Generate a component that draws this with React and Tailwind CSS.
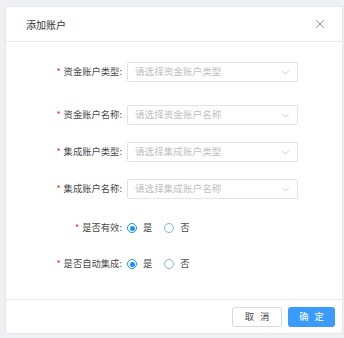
import React from 'react';

const FONT = { fontFamily: '"Noto Sans CJK SC", "Noto Sans", sans-serif' };

const Chevron = () => (
  <svg width="7" height="5" viewBox="0 0 7 5" className="shrink-0">
    <path d="M0.5 1 L3.5 4 L6.5 1" fill="none" stroke="#bfbfbf" strokeWidth="0.8" />
  </svg>
);

// label column ends at the colon, select starts 5px after it
const Label = ({ children }) => (
  <div className="w-[116px] shrink-0 flex justify-end items-center text-[9.3px] text-[#4a4a4a]">
    <span className="text-[#f5222d] mr-[3px] text-[9px]">*</span>
    <span>{children}:</span>
  </div>
);

const SelectRow = ({ label, placeholder, className }) => (
  <div className={`flex items-center ${className}`}>
    <Label>{label}</Label>
    <div className="ml-[5px] w-[171px] h-[20px] border border-[#e3e3e3] rounded-[2px] bg-white flex items-center justify-between pl-[7px] pr-[8px]">
      <span className="text-[9.6px] text-[#c0c0c0] leading-none">{placeholder}</span>
      <Chevron />
    </div>
  </div>
);

const Radio = ({ checked, text }) => (
  <div className="flex items-center">
    <span className={`w-[10px] h-[10px] rounded-full border flex items-center justify-center bg-white ${checked ? 'border-[#1890ff]' : 'border-[#7db4f0]'}`}>
      {checked && <span className="w-[5px] h-[5px] rounded-full bg-[#1890ff]" />}
    </span>
    <span className="ml-[6px] text-[9.3px] text-[#4a4a4a]">{text}</span>
  </div>
);

const RadioRow = ({ label, className }) => (
  <div className={`flex items-center h-[20px] ${className}`}>
    <Label>{label}</Label>
    <div className="ml-[5px] flex items-center gap-[12px]">
      <Radio checked text="是" />
      <Radio text="否" />
    </div>
  </div>
);

const SpacedText = ({ a, b }) => (
  <span className="flex items-center justify-center gap-[6px]">
    <span>{a}</span>
    <span>{b}</span>
  </span>
);

export default function App() {
  return (
    <div className="w-[344px] h-[338px] bg-[#eef0f3] pt-[6px] pl-[5px] overflow-hidden" style={FONT}>
      <div className="w-[338px] h-[328px] bg-white border border-[#e6e6e6] flex flex-col">
        <div className="h-[35px] shrink-0 border-b border-[#e8e8e8] flex items-center justify-between pr-[17px]">
          <span className="ml-[20px] text-[10px] text-[#333]">添加账户</span>
          <svg width="10" height="10" viewBox="0 0 10 10">
            <path d="M1 1 L9 9 M9 1 L1 9" stroke="#8c8c8c" strokeWidth="0.9" />
          </svg>
        </div>

        <div className="flex-1 pt-[20px]">
          <SelectRow label="资金账户类型" placeholder="请选择资金账户类型" className="" />
          <SelectRow label="资金账户名称" placeholder="请选择资金账户名称" className="mt-[23px]" />
          <SelectRow label="集成账户类型" placeholder="请选择集成账户类型" className="mt-[17px]" />
          <SelectRow label="集成账户名称" placeholder="请选择集成账户名称" className="mt-[17px]" />
          <RadioRow label="是否有效" className="mt-[19px]" />
          <RadioRow label="是否自动集成" className="mt-[16px]" />
        </div>

        <div className="h-[34px] shrink-0 border-t border-[#e8e8e8] flex items-center justify-end pr-[7px] gap-[6px]">
          <button className="w-[50px] h-[20px] border border-[#d9d9d9] rounded-[3px] bg-white text-[9.3px] text-[#444]">
            <SpacedText a="取" b="消" />
          </button>
          <button className="w-[47px] h-[20px] rounded-[3px] bg-[#3a9bfb] text-[9.3px] text-white">
            <SpacedText a="确" b="定" />
          </button>
        </div>
      </div>
    </div>
  );
}
